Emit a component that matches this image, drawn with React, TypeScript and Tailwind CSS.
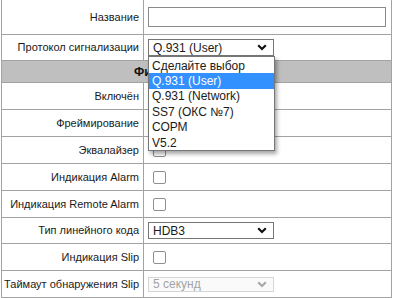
const Chevron = ({ disabled = false }: { disabled?: boolean }) => (
  <svg width="10" height="7" viewBox="0 0 10 7" className="shrink-0">
    <path
      d="M1.2 1.3 L5 5 L8.8 1.3"
      fill="none"
      stroke={disabled ? "#a8a8a8" : "#111"}
      strokeWidth="2.2"
    />
  </svg>
);

const FakeSelect = ({ value, disabled = false, h = "h-[17px]" }: { value: string; disabled?: boolean; h?: string }) => (
  <div
    className={`flex items-center justify-between w-[126px] ${h} pl-[4px] pr-[6px] border text-[12px] leading-none ${
      disabled ? "border-[#d6d6d6] text-[#a3a3a3] bg-[#fafafa]" : "border-[#767676] text-[#1a1a1a] bg-white"
    }`}
  >
    <span>{value}</span>
    <Chevron disabled={disabled} />
  </div>
);

const Check = () => <span className="block w-[13px] h-[13px] ml-[5px] border border-[#8f8f8f] rounded-[2px] bg-white" />;

const Row = ({ label, h, children }: { label: string; h: string; children?: React.ReactNode }) => (
  <div className={`flex ${h} border-b border-[#a3a3a3]`}>
    <div className="w-[142px] shrink-0 border-r border-[#a3a3a3] flex items-center justify-end pr-[4px] text-[11px] text-[#1a1a1a]">
      {label}
    </div>
    <div className="flex-1 flex items-center pl-[4px]">{children}</div>
  </div>
);

const options = ["Сделайте выбор", "Q.931 (User)", "Q.931 (Network)", "SS7 (ОКС №7)", "СОРМ", "V5.2"];

export default function App() {
  return (
    <div className="relative w-[393px] h-[298px] bg-white overflow-hidden" style={{ fontFamily: '"Liberation Sans", Arial, sans-serif' }}>
      <div className="ml-px w-[391px] border-l border-r border-[#a3a3a3]">
        <Row label="Название" h="h-[35px]">
          <div className="w-[238px] h-[20px] border border-[#8a8a8a] bg-white" />
        </Row>
        <Row label="Протокол сигнализации" h="h-[26px]">
          <FakeSelect value="Q.931 (User)" />
        </Row>
        <div className="h-[22px] border-b border-[#a3a3a3] bg-[#bfbfbf] flex items-center justify-center text-[12px] font-bold text-[#111]">
          Физический уровень
        </div>
        <Row label="Включён" h="h-[27px]">
          <Check />
        </Row>
        <Row label="Фреймирование" h="h-[27px]">
          <Check />
        </Row>
        <Row label="Эквалайзер" h="h-[27px]">
          <Check />
        </Row>
        <Row label="Индикация Alarm" h="h-[27px]">
          <Check />
        </Row>
        <Row label="Индикация Remote Alarm" h="h-[27px]">
          <Check />
        </Row>
        <Row label="Тип линейного кода" h="h-[26px]">
          <FakeSelect value="HDB3" />
        </Row>
        <Row label="Индикация Slip" h="h-[27px]">
          <Check />
        </Row>
        <Row label="Таймаут обнаружения Slip" h="h-[27px]">
          <FakeSelect value="5 секунд" disabled h="h-[15px]" />
        </Row>
      </div>

      {/* open dropdown list */}
      <div className="absolute left-[148px] top-[56px] w-[127px] h-[95px] border border-[#767676] bg-white shadow-[2px_3px_4px_rgba(0,0,0,0.35)] py-px">
        {options.map((o, i) => (
          <div
            key={i}
            className={`h-[15.4px] flex items-center pl-[3px] text-[12px] leading-none ${
              i === 1 ? "bg-[#3390ff] text-white" : "text-[#1a1a1a]"
            }`}
          >
            {o}
          </div>
        ))}
      </div>
    </div>
  );
}
